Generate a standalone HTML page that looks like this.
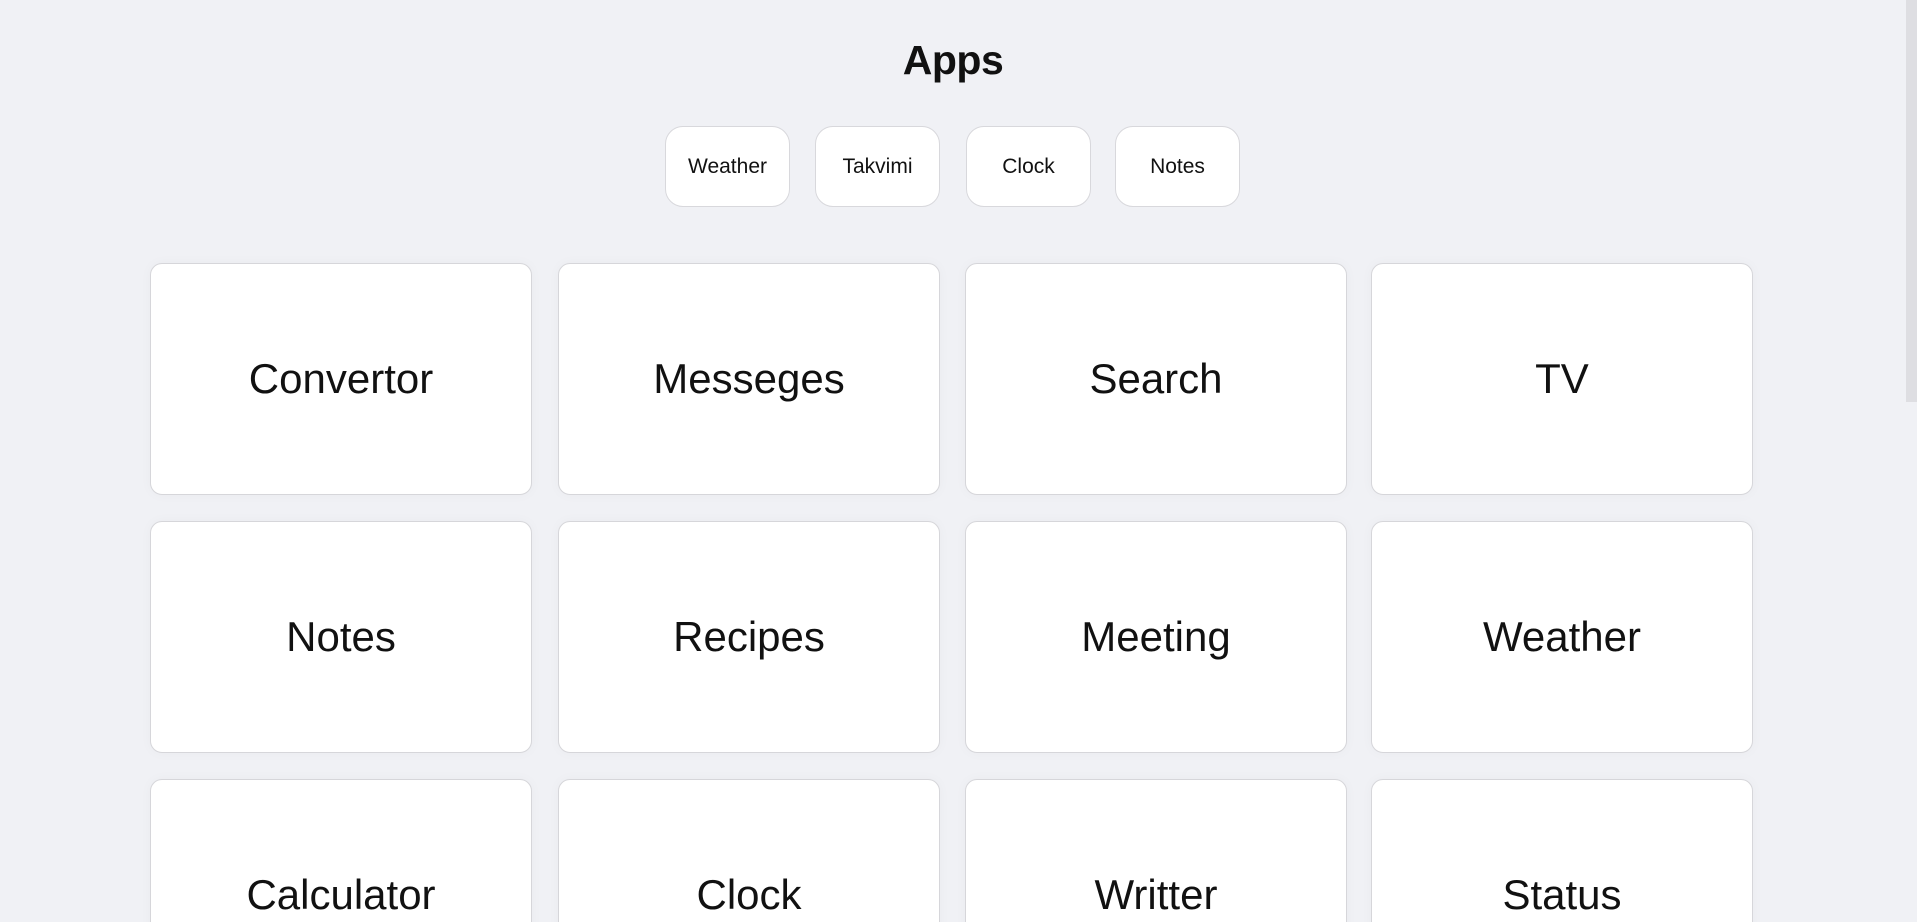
<!DOCTYPE html>
<html><head><style>
html,body{margin:0;padding:0;width:1917px;height:922px;overflow:hidden;background:#f0f1f5;font-family:"Liberation Sans",sans-serif;color:#111;}
#w{position:relative;width:1917px;height:922px;overflow:hidden}
.h{position:absolute;left:0;width:1906px;top:37px;text-align:center;font-size:41px;font-weight:bold;letter-spacing:-0.5px}
.chip{position:absolute;top:126px;width:123px;height:79px;background:#fff;border:1px solid #d8d8dc;border-radius:18px;display:flex;align-items:center;justify-content:center;font-size:21px}
.card{position:absolute;width:380px;height:230px;background:#fff;border:1px solid #d6d6da;border-radius:12px;display:flex;align-items:center;justify-content:center;font-size:42px;box-shadow:0 0 12px rgba(0,0,0,0.03)}
.sb{position:absolute;right:0;top:0;width:11px;height:922px;background:#f0f1f5}
.th{position:absolute;right:0;top:0;width:11px;height:402px;background:#dedee2}
</style></head><body><div id="w">
<div class="h">Apps</div>
<div class="chip" style="left:665px">Weather</div>
<div class="chip" style="left:815px">Takvimi</div>
<div class="chip" style="left:966px">Clock</div>
<div class="chip" style="left:1115px">Notes</div>

<div class="card" style="left:150px;top:263px">Convertor</div>
<div class="card" style="left:558px;top:263px">Messeges</div>
<div class="card" style="left:965px;top:263px">Search</div>
<div class="card" style="left:1371px;top:263px">TV</div>

<div class="card" style="left:150px;top:521px">Notes</div>
<div class="card" style="left:558px;top:521px">Recipes</div>
<div class="card" style="left:965px;top:521px">Meeting</div>
<div class="card" style="left:1371px;top:521px">Weather</div>

<div class="card" style="left:150px;top:779px">Calculator</div>
<div class="card" style="left:558px;top:779px">Clock</div>
<div class="card" style="left:965px;top:779px">Writter</div>
<div class="card" style="left:1371px;top:779px">Status</div>
<div class="sb"></div><div class="th"></div>
</div></body></html>
